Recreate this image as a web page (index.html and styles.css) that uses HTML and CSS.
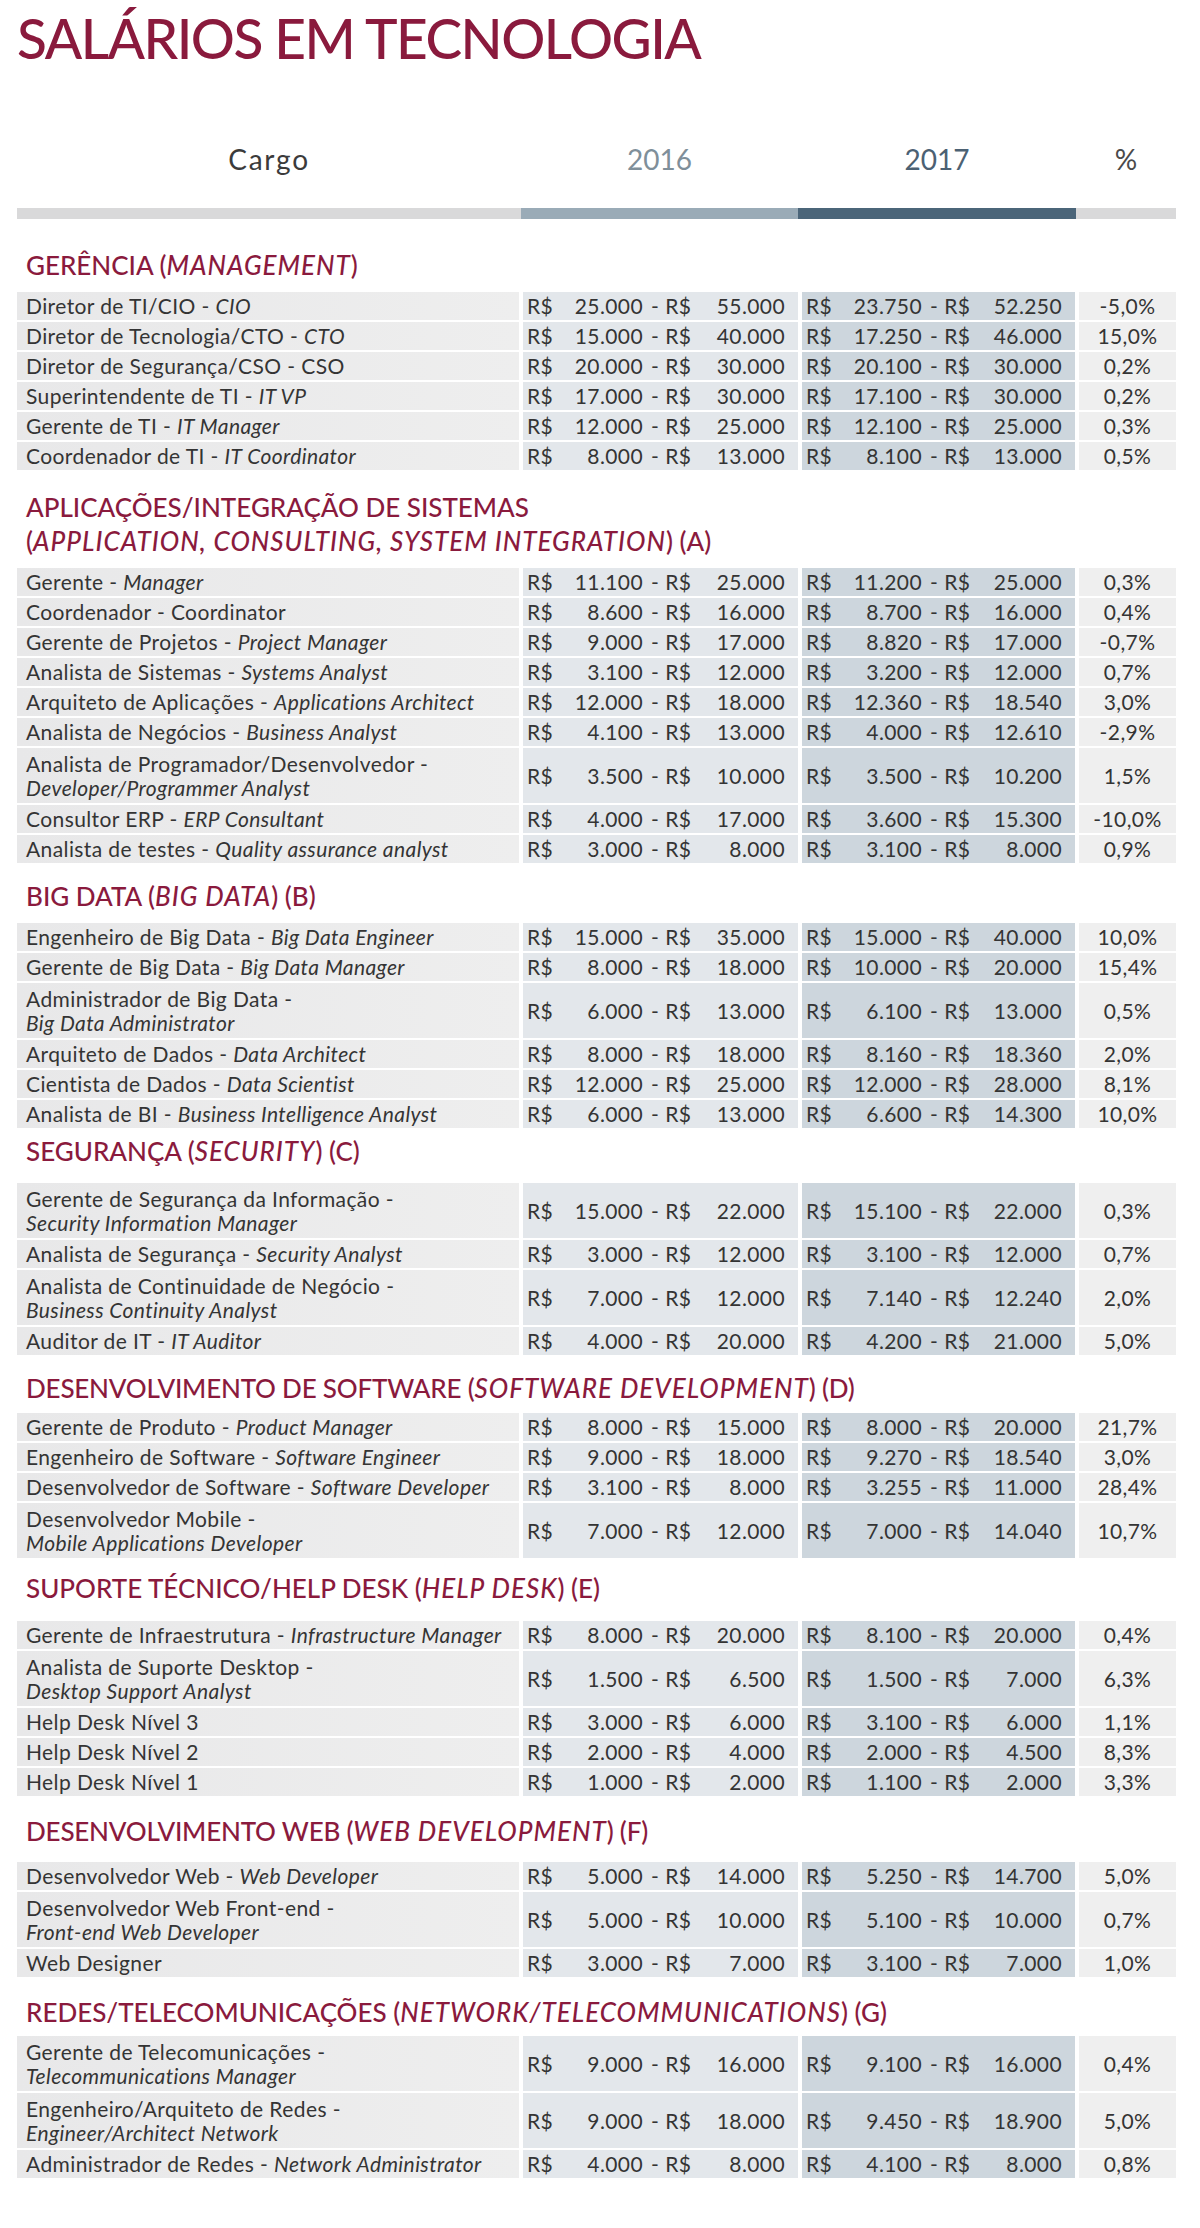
FILE: index.html
```html
<!DOCTYPE html>
<html lang="pt-BR">
<head>
<meta charset="utf-8">
<title>Salários em Tecnologia</title>
<link rel="stylesheet" href="styles.css">
</head>
<body>
<main class="page">
  <h1 class="title">SALÁRIOS EM TECNOLOGIA</h1>

  <div class="thead">
    <div class="th th-cargo">Cargo</div>
    <div class="th th-y16">2016</div>
    <div class="th th-y17">2017</div>
    <div class="th th-pct">%</div>
  </div>
  <div class="bars">
    <div class="bar bar-cargo"></div>
    <div class="bar bar-y16"></div>
    <div class="bar bar-y17"></div>
    <div class="bar bar-pct"></div>
  </div>

  <section class="sec sec-mgmt">
    <h2 class="sec-title">GERÊNCIA (<i>MANAGEMENT</i>)</h2>
    <div class="rows">
      <div class="row"><div class="cargo">Diretor de TI/CIO - <i>CIO</i></div><div class="money y16"><span>R$</span><span class="v">25.000</span><span class="sep"><span>-</span><span>R$</span></span><span class="v">55.000</span></div><div class="money y17"><span>R$</span><span class="v">23.750</span><span class="sep"><span>-</span><span>R$</span></span><span class="v">52.250</span></div><div class="pct">-5,0%</div></div>
      <div class="row"><div class="cargo">Diretor de Tecnologia/CTO - <i>CTO</i></div><div class="money y16"><span>R$</span><span class="v">15.000</span><span class="sep"><span>-</span><span>R$</span></span><span class="v">40.000</span></div><div class="money y17"><span>R$</span><span class="v">17.250</span><span class="sep"><span>-</span><span>R$</span></span><span class="v">46.000</span></div><div class="pct">15,0%</div></div>
      <div class="row"><div class="cargo">Diretor de Segurança/CSO - CSO</div><div class="money y16"><span>R$</span><span class="v">20.000</span><span class="sep"><span>-</span><span>R$</span></span><span class="v">30.000</span></div><div class="money y17"><span>R$</span><span class="v">20.100</span><span class="sep"><span>-</span><span>R$</span></span><span class="v">30.000</span></div><div class="pct">0,2%</div></div>
      <div class="row"><div class="cargo">Superintendente de TI - <i>IT VP</i></div><div class="money y16"><span>R$</span><span class="v">17.000</span><span class="sep"><span>-</span><span>R$</span></span><span class="v">30.000</span></div><div class="money y17"><span>R$</span><span class="v">17.100</span><span class="sep"><span>-</span><span>R$</span></span><span class="v">30.000</span></div><div class="pct">0,2%</div></div>
      <div class="row"><div class="cargo">Gerente de TI - <i>IT Manager</i></div><div class="money y16"><span>R$</span><span class="v">12.000</span><span class="sep"><span>-</span><span>R$</span></span><span class="v">25.000</span></div><div class="money y17"><span>R$</span><span class="v">12.100</span><span class="sep"><span>-</span><span>R$</span></span><span class="v">25.000</span></div><div class="pct">0,3%</div></div>
      <div class="row"><div class="cargo">Coordenador de TI - <i>IT Coordinator</i></div><div class="money y16"><span>R$</span><span class="v">8.000</span><span class="sep"><span>-</span><span>R$</span></span><span class="v">13.000</span></div><div class="money y17"><span>R$</span><span class="v">8.100</span><span class="sep"><span>-</span><span>R$</span></span><span class="v">13.000</span></div><div class="pct">0,5%</div></div>
    </div>
  </section>

  <section class="sec sec-a">
    <h2 class="sec-title">APLICAÇÕES/INTEGRAÇÃO DE SISTEMAS<br>(<i>APPLICATION, CONSULTING, SYSTEM INTEGRATION</i>) (A)</h2>
    <div class="rows">
      <div class="row"><div class="cargo">Gerente - <i>Manager</i></div><div class="money y16"><span>R$</span><span class="v">11.100</span><span class="sep"><span>-</span><span>R$</span></span><span class="v">25.000</span></div><div class="money y17"><span>R$</span><span class="v">11.200</span><span class="sep"><span>-</span><span>R$</span></span><span class="v">25.000</span></div><div class="pct">0,3%</div></div>
      <div class="row"><div class="cargo">Coordenador - Coordinator</div><div class="money y16"><span>R$</span><span class="v">8.600</span><span class="sep"><span>-</span><span>R$</span></span><span class="v">16.000</span></div><div class="money y17"><span>R$</span><span class="v">8.700</span><span class="sep"><span>-</span><span>R$</span></span><span class="v">16.000</span></div><div class="pct">0,4%</div></div>
      <div class="row"><div class="cargo">Gerente de Projetos - <i>Project Manager</i></div><div class="money y16"><span>R$</span><span class="v">9.000</span><span class="sep"><span>-</span><span>R$</span></span><span class="v">17.000</span></div><div class="money y17"><span>R$</span><span class="v">8.820</span><span class="sep"><span>-</span><span>R$</span></span><span class="v">17.000</span></div><div class="pct">-0,7%</div></div>
      <div class="row"><div class="cargo">Analista de Sistemas - <i>Systems Analyst</i></div><div class="money y16"><span>R$</span><span class="v">3.100</span><span class="sep"><span>-</span><span>R$</span></span><span class="v">12.000</span></div><div class="money y17"><span>R$</span><span class="v">3.200</span><span class="sep"><span>-</span><span>R$</span></span><span class="v">12.000</span></div><div class="pct">0,7%</div></div>
      <div class="row"><div class="cargo">Arquiteto de Aplicações - <i>Applications Architect</i></div><div class="money y16"><span>R$</span><span class="v">12.000</span><span class="sep"><span>-</span><span>R$</span></span><span class="v">18.000</span></div><div class="money y17"><span>R$</span><span class="v">12.360</span><span class="sep"><span>-</span><span>R$</span></span><span class="v">18.540</span></div><div class="pct">3,0%</div></div>
      <div class="row"><div class="cargo">Analista de Negócios - <i>Business Analyst</i></div><div class="money y16"><span>R$</span><span class="v">4.100</span><span class="sep"><span>-</span><span>R$</span></span><span class="v">13.000</span></div><div class="money y17"><span>R$</span><span class="v">4.000</span><span class="sep"><span>-</span><span>R$</span></span><span class="v">12.610</span></div><div class="pct">-2,9%</div></div>
      <div class="row tall"><div class="cargo">Analista de Programador/Desenvolvedor -<br><i>Developer/Programmer Analyst</i></div><div class="money y16"><span>R$</span><span class="v">3.500</span><span class="sep"><span>-</span><span>R$</span></span><span class="v">10.000</span></div><div class="money y17"><span>R$</span><span class="v">3.500</span><span class="sep"><span>-</span><span>R$</span></span><span class="v">10.200</span></div><div class="pct">1,5%</div></div>
      <div class="row"><div class="cargo">Consultor ERP - <i>ERP Consultant</i></div><div class="money y16"><span>R$</span><span class="v">4.000</span><span class="sep"><span>-</span><span>R$</span></span><span class="v">17.000</span></div><div class="money y17"><span>R$</span><span class="v">3.600</span><span class="sep"><span>-</span><span>R$</span></span><span class="v">15.300</span></div><div class="pct">-10,0%</div></div>
      <div class="row"><div class="cargo">Analista de testes - <i>Quality assurance analyst</i></div><div class="money y16"><span>R$</span><span class="v">3.000</span><span class="sep"><span>-</span><span>R$</span></span><span class="v">8.000</span></div><div class="money y17"><span>R$</span><span class="v">3.100</span><span class="sep"><span>-</span><span>R$</span></span><span class="v">8.000</span></div><div class="pct">0,9%</div></div>
    </div>
  </section>

  <section class="sec sec-b">
    <h2 class="sec-title">BIG DATA (<i>BIG DATA</i>) (B)</h2>
    <div class="rows">
      <div class="row"><div class="cargo">Engenheiro de Big Data - <i>Big Data Engineer</i></div><div class="money y16"><span>R$</span><span class="v">15.000</span><span class="sep"><span>-</span><span>R$</span></span><span class="v">35.000</span></div><div class="money y17"><span>R$</span><span class="v">15.000</span><span class="sep"><span>-</span><span>R$</span></span><span class="v">40.000</span></div><div class="pct">10,0%</div></div>
      <div class="row"><div class="cargo">Gerente de Big Data - <i>Big Data Manager</i></div><div class="money y16"><span>R$</span><span class="v">8.000</span><span class="sep"><span>-</span><span>R$</span></span><span class="v">18.000</span></div><div class="money y17"><span>R$</span><span class="v">10.000</span><span class="sep"><span>-</span><span>R$</span></span><span class="v">20.000</span></div><div class="pct">15,4%</div></div>
      <div class="row tall"><div class="cargo">Administrador de Big Data -<br><i>Big Data Administrator</i></div><div class="money y16"><span>R$</span><span class="v">6.000</span><span class="sep"><span>-</span><span>R$</span></span><span class="v">13.000</span></div><div class="money y17"><span>R$</span><span class="v">6.100</span><span class="sep"><span>-</span><span>R$</span></span><span class="v">13.000</span></div><div class="pct">0,5%</div></div>
      <div class="row"><div class="cargo">Arquiteto de Dados - <i>Data Architect</i></div><div class="money y16"><span>R$</span><span class="v">8.000</span><span class="sep"><span>-</span><span>R$</span></span><span class="v">18.000</span></div><div class="money y17"><span>R$</span><span class="v">8.160</span><span class="sep"><span>-</span><span>R$</span></span><span class="v">18.360</span></div><div class="pct">2,0%</div></div>
      <div class="row"><div class="cargo">Cientista de Dados - <i>Data Scientist</i></div><div class="money y16"><span>R$</span><span class="v">12.000</span><span class="sep"><span>-</span><span>R$</span></span><span class="v">25.000</span></div><div class="money y17"><span>R$</span><span class="v">12.000</span><span class="sep"><span>-</span><span>R$</span></span><span class="v">28.000</span></div><div class="pct">8,1%</div></div>
      <div class="row"><div class="cargo">Analista de BI - <i>Business Intelligence Analyst</i></div><div class="money y16"><span>R$</span><span class="v">6.000</span><span class="sep"><span>-</span><span>R$</span></span><span class="v">13.000</span></div><div class="money y17"><span>R$</span><span class="v">6.600</span><span class="sep"><span>-</span><span>R$</span></span><span class="v">14.300</span></div><div class="pct">10,0%</div></div>
    </div>
  </section>

  <section class="sec sec-c">
    <h2 class="sec-title">SEGURANÇA (<i>SECURITY</i>) (C)</h2>
    <div class="rows">
      <div class="row tall"><div class="cargo">Gerente de Segurança da Informação -<br><i>Security Information Manager</i></div><div class="money y16"><span>R$</span><span class="v">15.000</span><span class="sep"><span>-</span><span>R$</span></span><span class="v">22.000</span></div><div class="money y17"><span>R$</span><span class="v">15.100</span><span class="sep"><span>-</span><span>R$</span></span><span class="v">22.000</span></div><div class="pct">0,3%</div></div>
      <div class="row"><div class="cargo">Analista de Segurança - <i>Security Analyst</i></div><div class="money y16"><span>R$</span><span class="v">3.000</span><span class="sep"><span>-</span><span>R$</span></span><span class="v">12.000</span></div><div class="money y17"><span>R$</span><span class="v">3.100</span><span class="sep"><span>-</span><span>R$</span></span><span class="v">12.000</span></div><div class="pct">0,7%</div></div>
      <div class="row tall"><div class="cargo">Analista de Continuidade de Negócio -<br><i>Business Continuity Analyst</i></div><div class="money y16"><span>R$</span><span class="v">7.000</span><span class="sep"><span>-</span><span>R$</span></span><span class="v">12.000</span></div><div class="money y17"><span>R$</span><span class="v">7.140</span><span class="sep"><span>-</span><span>R$</span></span><span class="v">12.240</span></div><div class="pct">2,0%</div></div>
      <div class="row"><div class="cargo">Auditor de IT - <i>IT Auditor</i></div><div class="money y16"><span>R$</span><span class="v">4.000</span><span class="sep"><span>-</span><span>R$</span></span><span class="v">20.000</span></div><div class="money y17"><span>R$</span><span class="v">4.200</span><span class="sep"><span>-</span><span>R$</span></span><span class="v">21.000</span></div><div class="pct">5,0%</div></div>
    </div>
  </section>

  <section class="sec sec-d">
    <h2 class="sec-title">DESENVOLVIMENTO DE SOFTWARE (<i>SOFTWARE DEVELOPMENT</i>) (D)</h2>
    <div class="rows">
      <div class="row"><div class="cargo">Gerente de Produto - <i>Product Manager</i></div><div class="money y16"><span>R$</span><span class="v">8.000</span><span class="sep"><span>-</span><span>R$</span></span><span class="v">15.000</span></div><div class="money y17"><span>R$</span><span class="v">8.000</span><span class="sep"><span>-</span><span>R$</span></span><span class="v">20.000</span></div><div class="pct">21,7%</div></div>
      <div class="row"><div class="cargo">Engenheiro de Software - <i>Software Engineer</i></div><div class="money y16"><span>R$</span><span class="v">9.000</span><span class="sep"><span>-</span><span>R$</span></span><span class="v">18.000</span></div><div class="money y17"><span>R$</span><span class="v">9.270</span><span class="sep"><span>-</span><span>R$</span></span><span class="v">18.540</span></div><div class="pct">3,0%</div></div>
      <div class="row"><div class="cargo">Desenvolvedor de Software - <i>Software Developer</i></div><div class="money y16"><span>R$</span><span class="v">3.100</span><span class="sep"><span>-</span><span>R$</span></span><span class="v">8.000</span></div><div class="money y17"><span>R$</span><span class="v">3.255</span><span class="sep"><span>-</span><span>R$</span></span><span class="v">11.000</span></div><div class="pct">28,4%</div></div>
      <div class="row tall"><div class="cargo">Desenvolvedor Mobile -<br><i>Mobile Applications Developer</i></div><div class="money y16"><span>R$</span><span class="v">7.000</span><span class="sep"><span>-</span><span>R$</span></span><span class="v">12.000</span></div><div class="money y17"><span>R$</span><span class="v">7.000</span><span class="sep"><span>-</span><span>R$</span></span><span class="v">14.040</span></div><div class="pct">10,7%</div></div>
    </div>
  </section>

  <section class="sec sec-e">
    <h2 class="sec-title">SUPORTE TÉCNICO/HELP DESK (<i>HELP DESK</i>) (E)</h2>
    <div class="rows">
      <div class="row"><div class="cargo">Gerente de Infraestrutura - <i>Infrastructure Manager</i></div><div class="money y16"><span>R$</span><span class="v">8.000</span><span class="sep"><span>-</span><span>R$</span></span><span class="v">20.000</span></div><div class="money y17"><span>R$</span><span class="v">8.100</span><span class="sep"><span>-</span><span>R$</span></span><span class="v">20.000</span></div><div class="pct">0,4%</div></div>
      <div class="row tall"><div class="cargo">Analista de Suporte Desktop -<br><i>Desktop Support Analyst</i></div><div class="money y16"><span>R$</span><span class="v">1.500</span><span class="sep"><span>-</span><span>R$</span></span><span class="v">6.500</span></div><div class="money y17"><span>R$</span><span class="v">1.500</span><span class="sep"><span>-</span><span>R$</span></span><span class="v">7.000</span></div><div class="pct">6,3%</div></div>
      <div class="row"><div class="cargo">Help Desk Nível 3</div><div class="money y16"><span>R$</span><span class="v">3.000</span><span class="sep"><span>-</span><span>R$</span></span><span class="v">6.000</span></div><div class="money y17"><span>R$</span><span class="v">3.100</span><span class="sep"><span>-</span><span>R$</span></span><span class="v">6.000</span></div><div class="pct">1,1%</div></div>
      <div class="row"><div class="cargo">Help Desk Nível 2</div><div class="money y16"><span>R$</span><span class="v">2.000</span><span class="sep"><span>-</span><span>R$</span></span><span class="v">4.000</span></div><div class="money y17"><span>R$</span><span class="v">2.000</span><span class="sep"><span>-</span><span>R$</span></span><span class="v">4.500</span></div><div class="pct">8,3%</div></div>
      <div class="row"><div class="cargo">Help Desk Nível 1</div><div class="money y16"><span>R$</span><span class="v">1.000</span><span class="sep"><span>-</span><span>R$</span></span><span class="v">2.000</span></div><div class="money y17"><span>R$</span><span class="v">1.100</span><span class="sep"><span>-</span><span>R$</span></span><span class="v">2.000</span></div><div class="pct">3,3%</div></div>
    </div>
  </section>

  <section class="sec sec-f">
    <h2 class="sec-title">DESENVOLVIMENTO WEB (<i>WEB DEVELOPMENT</i>) (F)</h2>
    <div class="rows">
      <div class="row"><div class="cargo">Desenvolvedor Web - <i>Web Developer</i></div><div class="money y16"><span>R$</span><span class="v">5.000</span><span class="sep"><span>-</span><span>R$</span></span><span class="v">14.000</span></div><div class="money y17"><span>R$</span><span class="v">5.250</span><span class="sep"><span>-</span><span>R$</span></span><span class="v">14.700</span></div><div class="pct">5,0%</div></div>
      <div class="row tall"><div class="cargo">Desenvolvedor Web Front-end -<br><i>Front-end Web Developer</i></div><div class="money y16"><span>R$</span><span class="v">5.000</span><span class="sep"><span>-</span><span>R$</span></span><span class="v">10.000</span></div><div class="money y17"><span>R$</span><span class="v">5.100</span><span class="sep"><span>-</span><span>R$</span></span><span class="v">10.000</span></div><div class="pct">0,7%</div></div>
      <div class="row"><div class="cargo">Web Designer</div><div class="money y16"><span>R$</span><span class="v">3.000</span><span class="sep"><span>-</span><span>R$</span></span><span class="v">7.000</span></div><div class="money y17"><span>R$</span><span class="v">3.100</span><span class="sep"><span>-</span><span>R$</span></span><span class="v">7.000</span></div><div class="pct">1,0%</div></div>
    </div>
  </section>

  <section class="sec sec-g">
    <h2 class="sec-title">REDES/TELECOMUNICAÇÕES (<i>NETWORK/TELECOMMUNICATIONS</i>) (G)</h2>
    <div class="rows">
      <div class="row tall"><div class="cargo">Gerente de Telecomunicações -<br><i>Telecommunications Manager</i></div><div class="money y16"><span>R$</span><span class="v">9.000</span><span class="sep"><span>-</span><span>R$</span></span><span class="v">16.000</span></div><div class="money y17"><span>R$</span><span class="v">9.100</span><span class="sep"><span>-</span><span>R$</span></span><span class="v">16.000</span></div><div class="pct">0,4%</div></div>
      <div class="row tall"><div class="cargo">Engenheiro/Arquiteto de Redes -<br><i>Engineer/Architect Network</i></div><div class="money y16"><span>R$</span><span class="v">9.000</span><span class="sep"><span>-</span><span>R$</span></span><span class="v">18.000</span></div><div class="money y17"><span>R$</span><span class="v">9.450</span><span class="sep"><span>-</span><span>R$</span></span><span class="v">18.900</span></div><div class="pct">5,0%</div></div>
      <div class="row"><div class="cargo">Administrador de Redes - <i>Network Administrator</i></div><div class="money y16"><span>R$</span><span class="v">4.000</span><span class="sep"><span>-</span><span>R$</span></span><span class="v">8.000</span></div><div class="money y17"><span>R$</span><span class="v">4.100</span><span class="sep"><span>-</span><span>R$</span></span><span class="v">8.000</span></div><div class="pct">0,8%</div></div>
    </div>
  </section>
</main>
</body>
</html>
```

FILE: styles.css
```css
html, body {
  margin: 0;
  padding: 0;
  background: #ffffff;
}

body {
  font-family: Lato, "Liberation Sans", sans-serif;
  color: #343434;
}

.page {
  width: 1159px;
  padding: 0 0 0 17px;
}

.title {
  margin: 11px 0 0;
  font-size: 55px;
  line-height: 55px;
  font-weight: 500;
  color: #8a1a3d;
  letter-spacing: -1.5px;
}

/* header */
.thead {
  display: grid;
  grid-template-columns: 504px 277px 278px 100px;
  margin-top: 79px;
  font-size: 28px;
  line-height: 28px;
  text-align: center;
}

.th-cargo { color: #3b3b3b; letter-spacing: 1.8px; }
.th-y16 { color: #7f8f9a; }
.th-y17 { color: #4c6173; }
.th-pct { color: #4a4a4a; }

.bars {
  display: grid;
  grid-template-columns: 504px 277px 278px 100px;
  height: 11px;
  margin-top: 35px;
}

.bar-cargo, .bar-pct { background: #d9d9da; }
.bar-y16 { background: #9aabb7; }
.bar-y17 { background: #4b6579; }

/* sections */
.sec-title {
  margin: 20px 0 14px;
  padding-left: 9px;
  font-size: 26px;
  line-height: 26px;
  font-weight: 500;
  color: #8a1a3d;
}

.sec-title i {
  font-style: italic;
  letter-spacing: 1px;
}

.sec-mgmt .sec-title { margin: 33px 0 14px; }
.sec-a .sec-title { margin: 20px 0 10px; line-height: 34px; }
.sec-b .sec-title { margin: 20px 0 14px; }
.sec-c .sec-title { margin: 10px 0 19px; }
.sec-d .sec-title { margin: 20px 0 12px; }
.sec-e .sec-title { margin: 17px 0 20px; }
.sec-f .sec-title { margin: 22px 0 18px; }
.sec-g .sec-title { margin: 22px 0 11px; }

.sec-d .sec-title,
.sec-f .sec-title {
  letter-spacing: -0.2px;
}

.rows {
  display: flex;
  flex-direction: column;
  gap: 2px;
}

.row {
  display: grid;
  grid-template-columns: 502px 275px 273px 97px;
  column-gap: 4px;
  height: 28px;
  font-size: 21px;
  line-height: 24px;
  letter-spacing: 0.4px;
}

.row.tall {
  height: 55px;
}

.cargo {
  display: block;
  padding-left: 9px;
  line-height: 28px;
  background: linear-gradient(90deg, #e8e8e9 0%, #eeeeee 100%);
  white-space: nowrap;
}

.row.tall .cargo {
  padding-top: 3.5px;
  line-height: 24px;
}

.money {
  display: grid;
  grid-template-columns: 24px 92px auto 1fr;
  padding: 0 13px 0 4px;
  align-items: center;
}

.y16 { background: #e3e7eb; }
.y17 { background: #cdd6dd; }

.money .v {
  text-align: right;
}

.money .sep {
  display: flex;
  gap: 6px;
  padding-left: 8px;
}

.pct {
  display: flex;
  align-items: center;
  justify-content: center;
  background: #efefef;
}
```
